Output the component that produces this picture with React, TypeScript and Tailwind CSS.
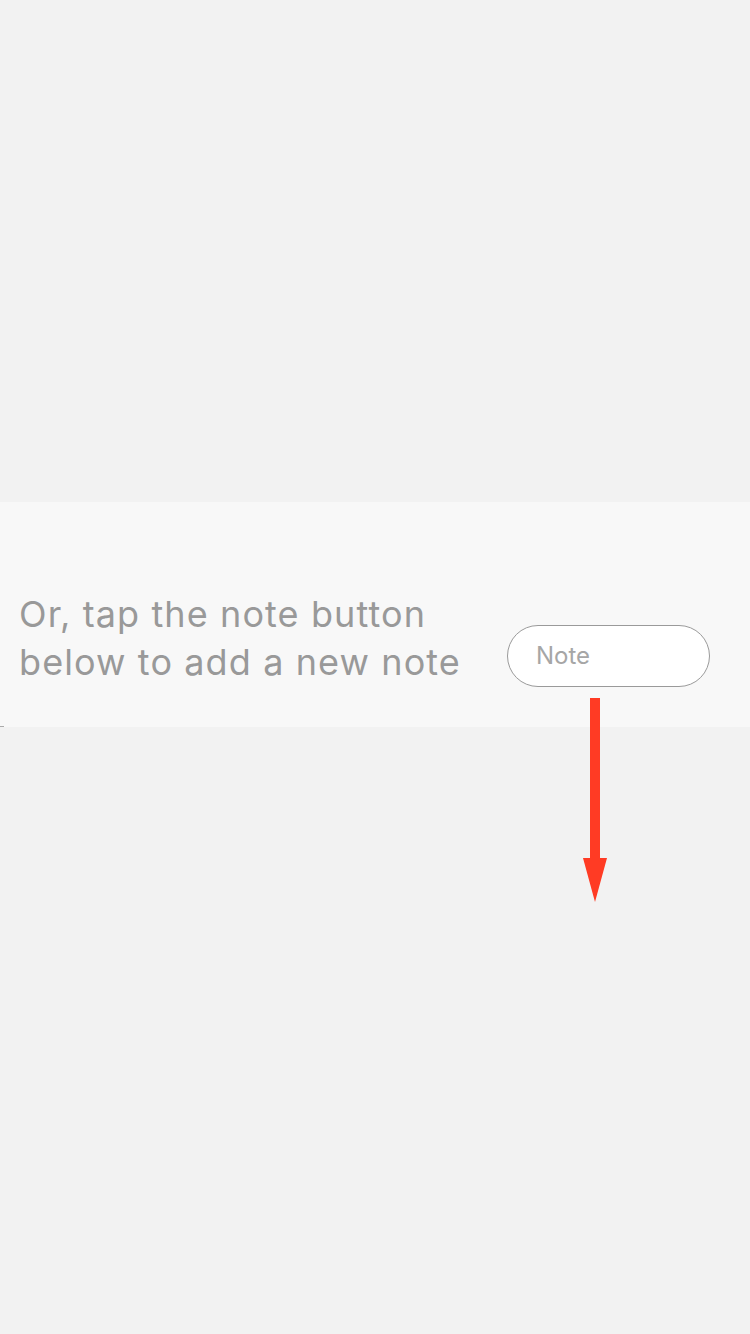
import React from 'react';

const ArrowDown = () => (
  <svg width="26" height="206" viewBox="0 0 26 206" className="block">
    <rect x="8" y="0" width="10" height="166" fill="#ff3b24" />
    <polygon points="1,160 25,160 13,204" fill="#ff3b24" />
  </svg>
);

export default function App() {
  return (
    <div className="min-h-[1334px] w-[750px] bg-[#f2f2f2] font-['Inter','Liberation_Sans',sans-serif]">
      <div className="h-[502px]" />

      {/* Hint panel */}
      <div className="relative h-[225px] bg-[#f8f8f8]">
        <div className="flex items-end justify-between pl-[19px] pr-[40px] pt-[88px]">
          <p className="text-[36px] leading-[48px] tracking-[1.1px] text-[#999999]">
            Or, tap the note button
            <br />
            below to add a new note
          </p>
          <button className="mb-[-1px] flex h-[62px] w-[203px] shrink-0 items-center rounded-full border border-[#9a9a9a] bg-white pl-[28px] text-[24px] text-[#a6a6a6]">
            Note
          </button>
        </div>

        {/* arrow pointing at the tab bar */}
        <div className="absolute left-[582px] top-[196px]">
          <ArrowDown />
        </div>

        <div className="absolute bottom-0 left-0 h-px w-[4px] bg-[#aaaaaa]" />
      </div>
    </div>
  );
}
